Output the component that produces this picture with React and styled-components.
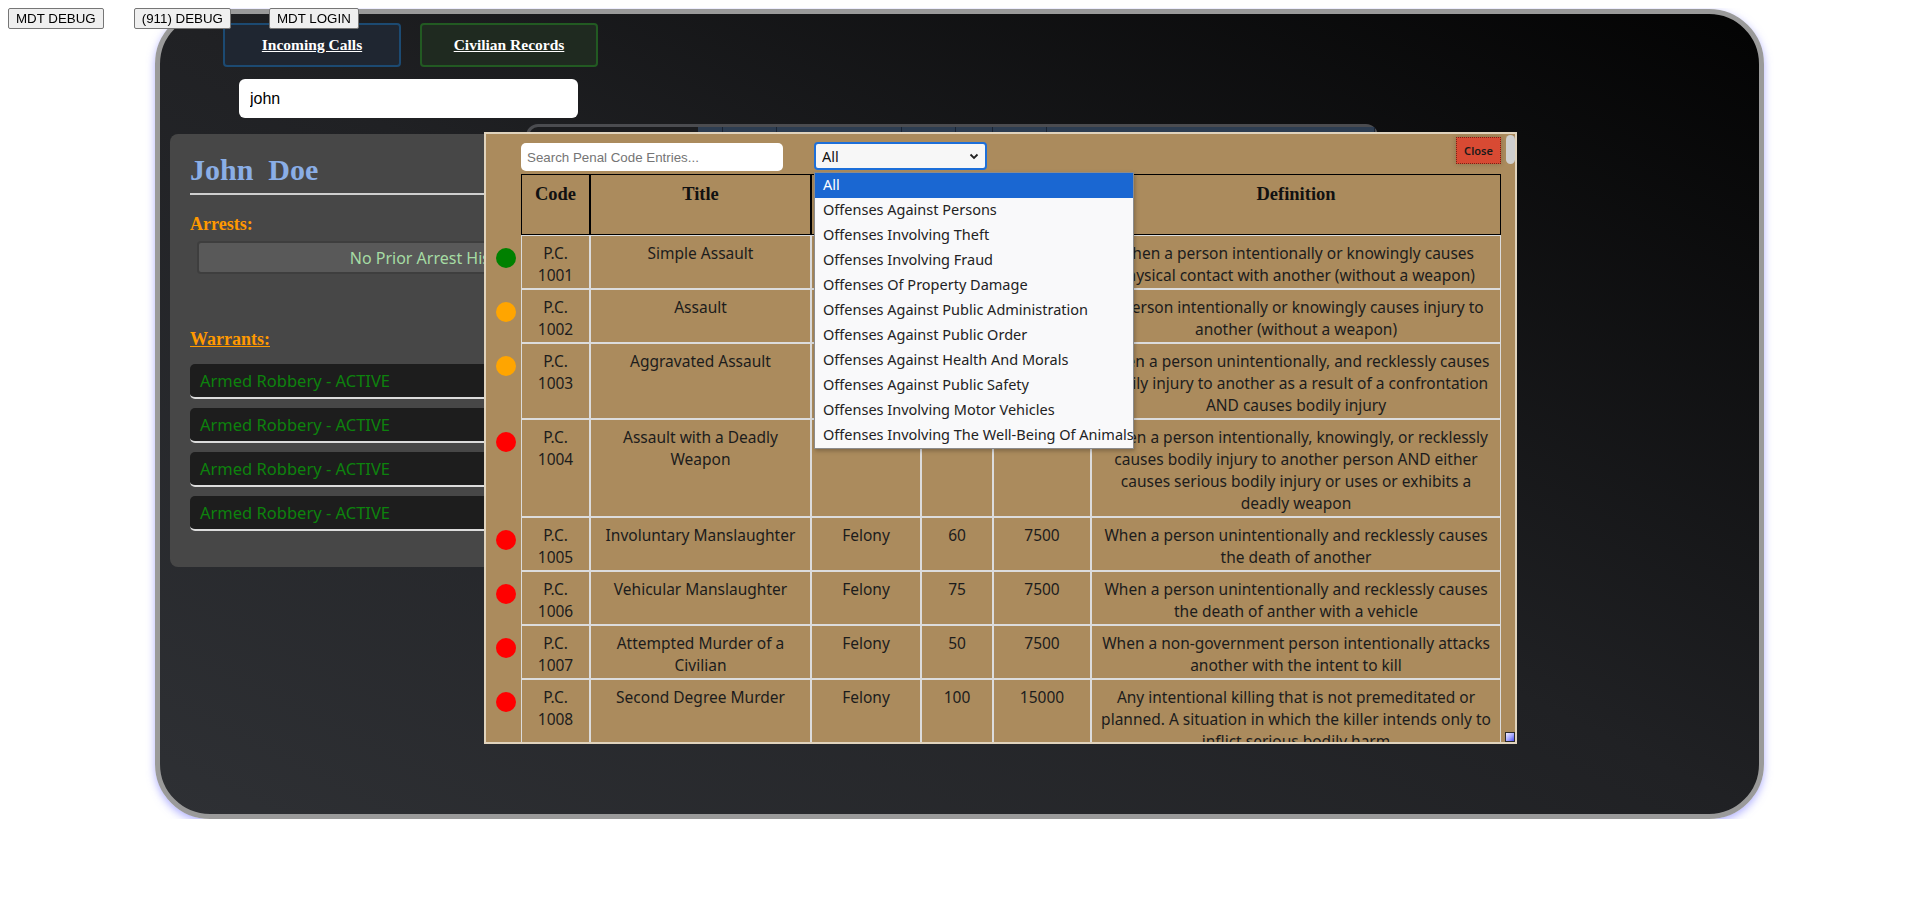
import React from 'react';
import styled, { createGlobalStyle } from 'styled-components';

const GlobalStyle = createGlobalStyle`
  body {
    margin: 8px;
    background: #fff;
    font-family: "Liberation Sans", Arial, sans-serif;
  }
`;

const penalCodes = [
  { code: 1001, title: 'Simple Assault', cls: 'Misdemeanor', time: 5, fine: 500, level: 'low', def: 'When a person intentionally or knowingly causes physical contact with another (without a weapon)' },
  { code: 1002, title: 'Assault', cls: 'Misdemeanor', time: 10, fine: 850, level: 'mid', def: 'A person intentionally or knowingly causes injury to another (without a weapon)' },
  { code: 1003, title: 'Aggravated Assault', cls: 'Misdemeanor', time: 15, fine: 1250, level: 'mid', def: 'When a person unintentionally, and recklessly causes bodily injury to another as a result of a confrontation AND causes bodily injury' },
  { code: 1004, title: 'Assault with a Deadly Weapon', cls: 'Felony', time: 30, fine: 3750, level: 'high', def: 'When a person intentionally, knowingly, or recklessly causes bodily injury to another person AND either causes serious bodily injury or uses or exhibits a deadly weapon' },
  { code: 1005, title: 'Involuntary Manslaughter', cls: 'Felony', time: 60, fine: 7500, level: 'high', def: 'When a person unintentionally and recklessly causes the death of another' },
  { code: 1006, title: 'Vehicular Manslaughter', cls: 'Felony', time: 75, fine: 7500, level: 'high', def: 'When a person unintentionally and recklessly causes the death of anther with a vehicle' },
  { code: 1007, title: 'Attempted Murder of a Civilian', cls: 'Felony', time: 50, fine: 7500, level: 'high', def: 'When a non-government person intentionally attacks another with the intent to kill' },
  { code: 1008, title: 'Second Degree Murder', cls: 'Felony', time: 100, fine: 15000, level: 'high', def: 'Any intentional killing that is not premeditated or planned. A situation in which the killer intends only to inflict serious bodily harm' },
];

// rest of the penal code, below the fold of the scrolling list
const moreOffenses = [
  ['First Degree Murder', 'Felony', 150, 25000, 'high', 'Any intentional killing that is premeditated or planned'],
  ['Kidnapping', 'Felony', 40, 5000, 'high', 'Taking or holding a person against their will'],
  ['Unlawful Imprisonment', 'Misdemeanor', 15, 1500, 'mid', 'Restraining a person without legal authority'],
  ['Criminal Threats', 'Misdemeanor', 10, 1000, 'mid', 'Threatening another person with death or great bodily injury'],
  ['Hostage Taking', 'Felony', 60, 7500, 'high', 'Holding a person against their will to gain leverage'],
  ['Petty Theft', 'Misdemeanor', 0, 250, 'low', 'Stealing property valued at less than $500'],
  ['Grand Theft', 'Felony', 20, 2500, 'mid', 'Stealing property valued at more than $500'],
  ['Grand Theft Auto', 'Felony', 25, 3000, 'high', 'Stealing a motor vehicle belonging to another'],
  ['Robbery', 'Felony', 25, 2000, 'high', 'Taking property from another by force or threat of force'],
  ['Armed Robbery', 'Felony', 40, 5000, 'high', 'Taking property from another by force while armed with a weapon'],
  ['Burglary', 'Felony', 20, 2000, 'mid', 'Entering a structure with the intent to commit a crime'],
  ['Possession of Stolen Property', 'Misdemeanor', 5, 750, 'mid', 'Knowingly holding property obtained by theft'],
  ['Fraud', 'Felony', 15, 2500, 'mid', 'Deceiving another person for personal or financial gain'],
  ['Identity Theft', 'Felony', 20, 3000, 'mid', 'Using the personal information of another without consent'],
  ['Forgery', 'Felony', 15, 2000, 'mid', 'Creating or altering a document with intent to defraud'],
  ['Impersonating a Public Servant', 'Felony', 20, 2500, 'high', 'Pretending to be a government official or officer'],
  ['Vandalism', 'Misdemeanor', 0, 600, 'low', 'Willfully damaging the property of another'],
  ['Arson', 'Felony', 35, 5000, 'high', 'Intentionally setting fire to a structure or property'],
  ['Trespassing', 'Misdemeanor', 0, 300, 'low', 'Entering or remaining on property without permission'],
  ['Obstruction of Justice', 'Misdemeanor', 10, 1000, 'mid', 'Interfering with a public servant performing their duties'],
  ['Resisting Arrest', 'Misdemeanor', 10, 1000, 'mid', 'Intentionally preventing a peace officer from making an arrest'],
  ['Bribery', 'Felony', 20, 5000, 'high', 'Offering anything of value to influence a public servant'],
  ['Perjury', 'Felony', 15, 2500, 'mid', 'Knowingly making a false statement under oath'],
  ['Disorderly Conduct', 'Misdemeanor', 0, 250, 'low', 'Acting in a manner that disturbs the public peace'],
  ['Public Intoxication', 'Infraction', 0, 150, 'low', 'Appearing in a public place while intoxicated'],
  ['Inciting a Riot', 'Felony', 20, 2500, 'mid', 'Encouraging a group to commit violence or damage'],
  ['Possession of a Controlled Substance', 'Misdemeanor', 10, 1000, 'mid', 'Knowingly possessing an illegal drug without a prescription'],
  ['Drug Trafficking', 'Felony', 40, 10000, 'high', 'Selling or transporting a controlled substance'],
  ['Brandishing a Firearm', 'Misdemeanor', 10, 1000, 'mid', 'Displaying a firearm in a threatening manner'],
  ['Unlawful Discharge of a Firearm', 'Felony', 15, 2000, 'mid', 'Firing a weapon in a negligent or reckless manner'],
  ['Possession of an Illegal Weapon', 'Felony', 20, 3000, 'high', 'Possessing a weapon prohibited by law'],
  ['Reckless Driving', 'Misdemeanor', 5, 750, 'mid', 'Operating a vehicle with willful disregard for safety'],
  ['Speeding', 'Infraction', 0, 250, 'low', 'Operating a vehicle above the posted speed limit'],
  ['Driving Under the Influence', 'Misdemeanor', 10, 1500, 'mid', 'Operating a vehicle while impaired by alcohol or drugs'],
  ['Evading a Peace Officer', 'Felony', 20, 2500, 'high', 'Fleeing from a peace officer in a motor vehicle'],
  ['Hit and Run', 'Felony', 15, 2000, 'mid', 'Leaving the scene of a collision without stopping'],
  ['Animal Cruelty', 'Misdemeanor', 10, 1000, 'mid', 'Causing needless suffering or harm to an animal'],
  ['Poaching', 'Misdemeanor', 5, 1500, 'mid', 'Hunting or taking wildlife without a license'],
  ['Animal Neglect', 'Misdemeanor', 0, 500, 'low', 'Failing to provide proper care for an animal'],
  ['Loitering', 'Infraction', 0, 100, 'low', 'Remaining in a public place without apparent purpose'],
];

const allCodes = [
  ...penalCodes,
  ...Array.from({ length: 192 }, (_, i) => {
    const [title, cls, time, fine, level, def] = moreOffenses[i % moreOffenses.length];
    return { code: 1009 + i, title, cls, time, fine, level, def };
  }),
];

const categories = [
  'All',
  'Offenses Against Persons',
  'Offenses Involving Theft',
  'Offenses Involving Fraud',
  'Offenses Of Property Damage',
  'Offenses Against Public Administration',
  'Offenses Against Public Order',
  'Offenses Against Health And Morals',
  'Offenses Against Public Safety',
  'Offenses Involving Motor Vehicles',
  'Offenses Involving The Well-Being Of Animals',
];

const warrants = ['Armed Robbery', 'Armed Robbery', 'Armed Robbery', 'Armed Robbery'];

const levelColors = { low: '#008000', mid: '#ffa500', high: '#ff0000' };

function App() {
  return (
    <>
      <GlobalStyle />
      <DebugBar>
        <DebugButton>MDT DEBUG</DebugButton>
        <DebugButton $offset={30}>(911) DEBUG</DebugButton>
        <DebugButton $offset={38}>MDT LOGIN</DebugButton>
      </DebugBar>

      <Frame>
        <NavRow>
          <NavTab $tone="blue"><a>Incoming Calls</a></NavTab>
          <NavTab $tone="green"><a>Civilian Records</a></NavTab>
        </NavRow>

        <SearchBox defaultValue="john" />

        <RecordsPanel>
          <RecordsHead>
            <span /><span /><span /><span /><span /><span /><span />
          </RecordsHead>
        </RecordsPanel>

        <Card>
          <Name>John&nbsp;&nbsp;Doe</Name>
          <Rule />
          <SectionTitle>Arrests:</SectionTitle>
          <EmptyBox>No Prior Arrest History</EmptyBox>
          <SectionTitle $underline $gap={55}>Warrants:</SectionTitle>
          <WarrantList>
            {warrants.map((w, i) => (
              <Warrant key={i}>{w} - ACTIVE</Warrant>
            ))}
          </WarrantList>
        </Card>
      </Frame>

      <Modal>
        <ScrollThumb />
        <ResizeGrip />
        <Controls>
          <PenalSearch placeholder="Search Penal Code Entries..." />
          <SelectWrap>
            <Select defaultValue="All">
              {categories.map(c => <option key={c}>{c}</option>)}
            </Select>
            <Chevron width="10" height="7" viewBox="0 0 10 7">
              <polyline points="1.5,1.5 5,5 8.5,1.5" fill="none" stroke="#222" strokeWidth="1.8" />
            </Chevron>
            <DropList>
              {categories.map((c, i) => (
                <DropItem key={c} $active={i === 0}>{c}</DropItem>
              ))}
            </DropList>
          </SelectWrap>
          <CloseButton>Close</CloseButton>
        </Controls>

        <CodeTable>
          <colgroup>
            <col style={{ width: 25 }} />
            <col style={{ width: 69 }} />
            <col style={{ width: 221 }} />
            <col style={{ width: 110 }} />
            <col style={{ width: 72 }} />
            <col style={{ width: 98 }} />
            <col style={{ width: 410 }} />
          </colgroup>
          <thead>
            <tr>
              <DotHead />
              <Th>Code</Th>
              <Th>Title</Th>
              <Th>Class</Th>
              <Th>Time</Th>
              <Th>Fine</Th>
              <Th>Definition</Th>
            </tr>
          </thead>
          <tbody>
            {allCodes.map(row => (
              <tr key={row.code}>
                <DotCell><Dot $color={levelColors[row.level]} /></DotCell>
                <Td>P.C. {row.code}</Td>
                <Td>{row.title}</Td>
                <Td>{row.cls}</Td>
                <Td>{row.time}</Td>
                <Td>{row.fine}</Td>
                <Td>{row.def}</Td>
              </tr>
            ))}
          </tbody>
        </CodeTable>
      </Modal>
    </>
  );
}

const DebugBar = styled.div`
  position: fixed;
  top: 8px;
  left: 8px;
  z-index: 50;
  display: flex;
`;

const DebugButton = styled.button`
  margin-left: ${p => p.$offset || 0}px;
  height: 21px;
  padding: 1px 7px;
  font: 13.33px "Liberation Sans", Arial, sans-serif;
  color: #000;
  background: #efefef;
  border: 1px solid #767676;
  border-radius: 2px;
`;

const Frame = styled.div`
  position: relative;
  box-sizing: border-box;
  width: 1609px;
  height: 810px;
  margin: 1px 0 0 147px;
  padding-top: 9px;
  border: 5px solid #9a9a9a;
  border-radius: 55px;
  background: linear-gradient(to bottom left, #030303 0%, #202124 50%, #2e3034 100%);
  box-shadow: 0 3px 9px rgba(110, 110, 255, 0.55);
`;

const NavRow = styled.div`
  display: flex;
  gap: 19px;
  margin-left: 63px;
`;

const NavTab = styled.div`
  box-sizing: border-box;
  width: 178px;
  height: 44px;
  display: flex;
  align-items: center;
  justify-content: center;
  border: 2px solid ${p => (p.$tone === 'blue' ? '#1c4a72' : '#225a22')};
  background: ${p => (p.$tone === 'blue' ? '#1f2631' : '#1f2a20')};
  border-radius: 4px;

  a {
    color: #fff;
    font: bold 15.5px "Liberation Serif", "Times New Roman", serif;
    text-decoration: underline;
    cursor: pointer;
  }
`;

const SearchBox = styled.input`
  display: block;
  box-sizing: border-box;
  width: 339px;
  height: 39px;
  margin: 12px 0 0 79px;
  padding: 0 11px;
  border: none;
  border-radius: 6px;
  background: #fff;
  font: 16px "Liberation Sans", Arial, sans-serif;
  color: #000;
  outline: none;
`;

const RecordsPanel = styled.div`
  position: absolute;
  left: 366px;
  top: 110px;
  box-sizing: border-box;
  width: 852px;
  height: 360px;
  padding: 0 0 0 169px;
  border: 3px solid #4b4c50;
  border-radius: 12px;
  background: #1b1c1f;
`;

const RecordsHead = styled.div`
  display: grid;
  grid-template-columns: 25px 54px 125px 54px 37px 54px 1fr;
  height: 30px;
  background: #2d3d51;

  span {
    border-right: 1px solid #1a2433;
  }
`;

const Card = styled.div`
  position: relative;
  box-sizing: border-box;
  width: 530px;
  height: 433px;
  margin: 16px 0 0 10px;
  padding: 18px 20px 0;
  background: #474747;
  border-radius: 8px;
`;

const Name = styled.h1`
  margin: 0;
  font: bold 30px/35px "Liberation Serif", "Times New Roman", serif;
  color: #8aaee6;
`;

const Rule = styled.div`
  height: 2px;
  margin-top: 6px;
  background: #cfcfcf;
`;

const SectionTitle = styled.div`
  margin-top: ${p => p.$gap || 19}px;
  font: bold 18px/21px "Liberation Serif", "Times New Roman", serif;
  color: #ff9900;
  text-decoration: ${p => (p.$underline ? 'underline' : 'none')};
`;

const EmptyBox = styled.div`
  box-sizing: border-box;
  height: 33px;
  margin: 6px 7px 0;
  display: flex;
  align-items: center;
  justify-content: center;
  background: #595959;
  border: 2px solid #3e3e3e;
  border-radius: 4px;
  font: 16px "Noto Sans", sans-serif;
  color: #a6dca4;
`;

const WarrantList = styled.div`
  display: flex;
  flex-direction: column;
  gap: 9px;
  margin-top: 14px;
`;

const Warrant = styled.div`
  box-sizing: border-box;
  height: 35px;
  padding: 0 10px;
  display: flex;
  align-items: center;
  background: #1d1d1d;
  border-bottom: 2px solid #dcdcdc;
  border-radius: 5px;
  font: 16.5px "Noto Sans", sans-serif;
  color: #0d820d;
`;

const Modal = styled.div`
  position: fixed;
  left: 484px;
  top: 132px;
  z-index: 20;
  box-sizing: border-box;
  width: 1033px;
  height: 612px;
  padding: 9px 14px 0 10px;
  border: 2px solid #e0d3bd;
  background: #ab8b5d;
  overflow-y: auto;
`;

const ScrollThumb = styled.div`
  position: absolute;
  top: 1px;
  right: 0;
  width: 9px;
  height: 29px;
  border-radius: 5px;
  background: #cfcfcf;
`;

const ResizeGrip = styled.div`
  position: absolute;
  right: 0;
  bottom: 0;
  box-sizing: border-box;
  width: 10px;
  height: 10px;
  border: 1px solid #2a2a2a;
  background: linear-gradient(135deg, #f4eefe 0%, #a3a5ff 55%, #4b4df2 100%);
`;

const Controls = styled.div`
  display: flex;
  align-items: flex-start;
  height: 28px;
  margin-left: 25px;
`;

const PenalSearch = styled.input`
  box-sizing: border-box;
  width: 262px;
  height: 28px;
  padding: 0 6px;
  border: none;
  border-radius: 5px;
  background: #fff;
  font: 13.33px "Liberation Sans", Arial, sans-serif;
  outline: none;

  &::placeholder {
    color: #757575;
  }
`;

const SelectWrap = styled.div`
  position: relative;
  margin: -1px 0 0 31px;
`;

const Select = styled.select`
  box-sizing: border-box;
  width: 173px;
  height: 28px;
  padding: 0 6px;
  appearance: none;
  background: #f7f7f7;
  border: 2px solid #1d6fd9;
  border-radius: 4px;
  font: 14.5px "Noto Sans", sans-serif;
  color: #111;
  outline: none;
`;

const Chevron = styled.svg`
  position: absolute;
  right: 8px;
  top: 11px;
  pointer-events: none;
`;

const DropList = styled.div`
  position: absolute;
  top: 30px;
  left: 0;
  z-index: 5;
  box-sizing: border-box;
  width: 320px;
  background: #f9f9fa;
  border: 1px solid #8c8c8c;
  box-shadow: 1px 2px 4px rgba(0, 0, 0, 0.25);
`;

const DropItem = styled.div`
  height: 25px;
  padding-left: 8px;
  font: 14.5px/23px "Noto Sans", sans-serif;
  white-space: nowrap;
  color: ${p => (p.$active ? '#fff' : '#222')};
  background: ${p => (p.$active ? '#1a67d2' : 'transparent')};
`;

const CloseButton = styled.button`
  box-sizing: border-box;
  width: 45px;
  height: 27px;
  margin: -6px 0 0 auto;
  padding: 0;
  background: #d84a33;
  border: 1px dotted #7a2314;
  box-shadow: 0 0 5px rgba(0, 0, 0, 0.2);
  font: 600 11px "Noto Sans", sans-serif;
  color: #1a1a1a;
`;

const CodeTable = styled.table`
  width: 1005px;
  margin-top: 3px;
  table-layout: fixed;
  border-collapse: separate;
  border-spacing: 0;
`;

const Th = styled.th`
  padding: 8px 4px 29px;
  vertical-align: top;
  border: 1px solid #000;
  font: bold 18.5px/22px "Liberation Serif", "Times New Roman", serif;
  color: #111;
`;

const DotHead = styled.th`
  padding: 0;
`;

const Td = styled.td`
  padding: 6px 5px 2px;
  vertical-align: top;
  text-align: center;
  border: 1px solid #dcdcdc;
  font: 15.5px/22px "Noto Sans", sans-serif;
  color: #1c1c1c;
`;

const DotCell = styled.td`
  padding: 13px 0 0;
  vertical-align: top;
`;

const Dot = styled.span`
  display: block;
  width: 20px;
  height: 20px;
  border-radius: 50%;
  background: ${p => p.$color};
`;

export default App;
